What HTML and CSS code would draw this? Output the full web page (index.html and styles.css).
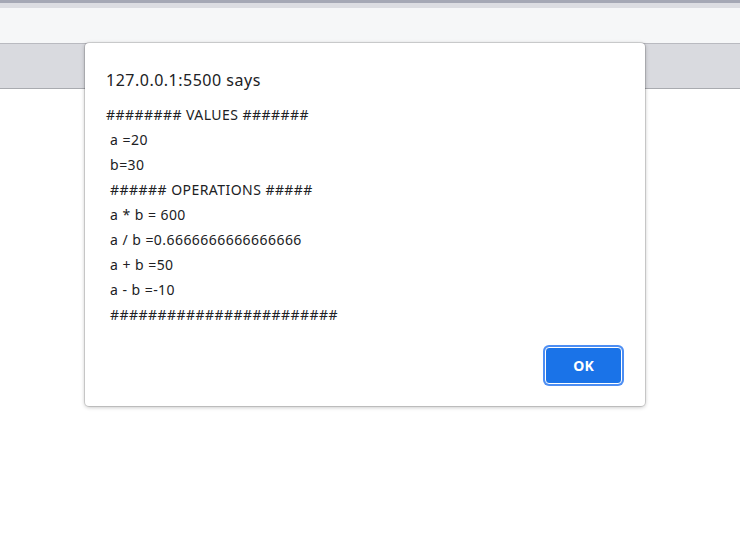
FILE: index.html
```html
<!DOCTYPE html>
<html>
<head>
<meta charset="utf-8">
<link rel="stylesheet" href="styles.css">
</head>
<body>
<div class="chrome">
  <div class="strip-dark"></div>
  <div class="strip-light"></div>
  <div class="toolbar"></div>
  <div class="tabbar"></div>
</div>
<div class="page"></div>
<div class="dialog">
  <div class="title">127.0.0.1:5500 says</div>
  <div class="message">######## VALUES #######
 a =20
 b=30
 ###### OPERATIONS #####
 a * b = 600
 a / b =0.6666666666666666
 a + b =50
 a - b =-10
 ########################</div>
  <div class="actions"><button class="ok">OK</button></div>
</div>
</body>
</html>
```
FILE: styles.css
```css
html, body {
  margin: 0;
  padding: 0;
  background: #ffffff;
  width: 740px;
  height: 546px;
  overflow: hidden;
  font-family: "Noto Sans", "Open Sans", sans-serif;
}
.chrome {
  display: flex;
  flex-direction: column;
}
.strip-dark {
  height: 3px;
  background: #a5a8b5;
}
.strip-light {
  height: 5px;
  background: #dcdde2;
}
.toolbar {
  height: 35px;
  background: #f6f7f8;
  border-bottom: 1px solid #b9bac0;
}
.tabbar {
  height: 44px;
  background: #d9dadf;
  border-bottom: 1px solid #a9abb0;
}
.dialog {
  position: absolute;
  left: 85px;
  top: 43px;
  width: 560px;
  height: 363px;
  box-sizing: border-box;
  background: #ffffff;
  border-radius: 4px;
  box-shadow: 0 0 0 1px rgba(0,0,0,0.12), 0 1px 4px rgba(0,0,0,0.28);
  padding: 26px 20px 20px 21px;
  display: flex;
  flex-direction: column;
}
.title {
  font-size: 16px;
  line-height: 22px;
  letter-spacing: 0.5px;
  color: #202124;
  height: 22px;
}
.message {
  margin-top: 11px;
  white-space: pre;
  font-size: 14px;
  line-height: 25px;
  letter-spacing: 0.45px;
  color: #202124;
}
.actions {
  margin-top: auto;
  display: flex;
  justify-content: flex-end;
  padding-right: 1px;
}
.ok {
  width: 77px;
  height: 37px;
  margin: 2px;
  box-sizing: border-box;
  background: #1a73e8;
  border: 1px solid #ffffff;
  border-radius: 4px;
  box-shadow: 0 0 0 2px #4d8ef3;
  color: #ffffff;
  font-family: "Noto Sans", "Open Sans", sans-serif;
  font-size: 14px;
  font-weight: 700;
  padding: 0;
}
```
